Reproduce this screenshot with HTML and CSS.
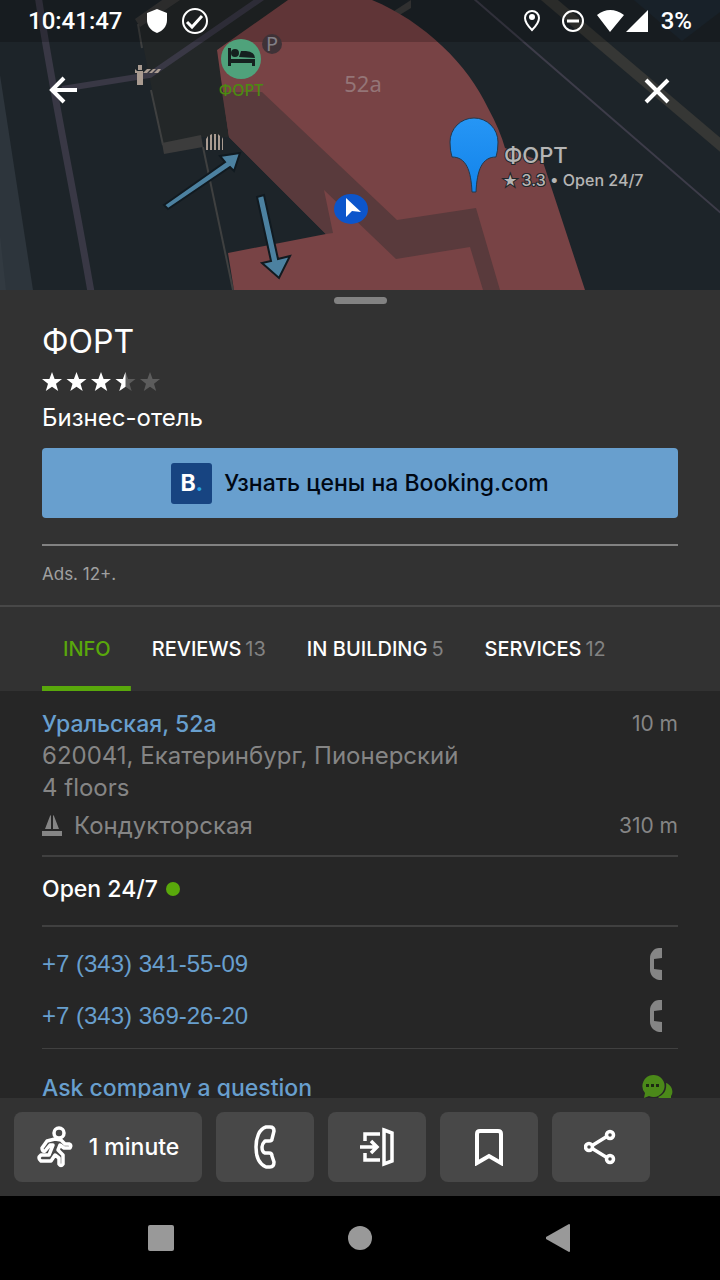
FILE: index.html
```html
<!DOCTYPE html>
<html lang="en">
<head>
    <meta charset="UTF-8">
    <meta name="viewport" content="width=device-width, initial-scale=1.0">
    <title>ФОРТ</title>
    <link rel="stylesheet" href="styles.css">
</head>
<body>
    <header class="map-area">
        <svg class="map" viewBox="0 0 720 290" preserveAspectRatio="xMidYMid slice" aria-hidden="true">
            <defs>
                <linearGradient id="pin" x1="0" y1="0" x2="0" y2="1">
                    <stop offset="0" stop-color="#2696f5"/>
                    <stop offset="1" stop-color="#1283ea"/>
                </linearGradient>
            </defs>
            <rect width="720" height="290" fill="#1d2429"/>
            <!-- ground and roads -->
            <path d="M0 75L33 290H0z" fill="#2d353c"/>
            <path d="M0 235L6 290H0z" fill="#323a41"/>
            <path d="M138 20L170 0H290L217 50L229 137L201 137L163 145z" fill="#232728"/>
            <path d="M634 0L682 41L720 12V0z" fill="#1e2a34"/>
            <path d="M38 -5C52 90 70 170 91 292" fill="none" stroke="#393845" stroke-width="7"/>
            <path d="M62 89L150 75L266 -5" fill="none" stroke="#393845" stroke-width="6"/>
            <path d="M135 19L165 -2H183L140 27z" fill="#383838"/>
            <path d="M138 24L142 48M151 90L163 145" stroke="#3f4040" stroke-width="2"/>
            <path d="M162 143L201 135L203 147L164 154z" fill="#3c3c3c"/>
            <path d="M203 147L233 290" stroke="#3f4040" stroke-width="2"/>
            <path d="M540 -8L724 148" stroke="#363735" stroke-width="11"/>
            <path d="M473 -2L722 214" stroke="#3d3c49" stroke-width="2"/>
            <path d="M391 13L411 0V8L398 16z" fill="#3c3c3c"/>
            <!-- building -->
            <path d="M288 0H372C425 22 468 65 488 108Q500 130 505 148L543 162L585 290H234L228 253L326 234L229 137L217 50z" fill="#784345"/>
            <path d="M229 137L222 92L262 92L397 220L476 208L500 290H483L470 247L396 259L324 190L333 233L326 234z" fill="#593a3c"/>
            <rect width="720" height="42" fill="#000" opacity=".2"/>
            <!-- direction arrows -->
            <g fill="#4c81a0" stroke="#111a20" stroke-width="2">
                <path d="M164 205L225 162L220 156L240 153L234 171L230 167L168 209z"/>
                <path d="M257 197L264 195L278 259L290 256L279 278L262 263L271 261z"/>
            </g>
            <!-- barrier and gate -->
            <g fill="#a99b91">
                <path d="M137 71H143V85H137zM138 65H142V70H138zM135 69L139 73H135z"/>
                <path d="M143 73L147 69H151L147 73zM149 73L153 69H156L152 73zM154 73L158 69H161L158 73z"/>
                <path d="M206 139L208 136V150H206zM210 135L212 134V150H210zM214 134H216V150H214zM218 134L220 136V150H218zM222 137L223 139V150H222z"/>
            </g>
            <!-- hotel and parking -->
            <circle cx="272" cy="44" r="10" fill="#3f3237"/>
            <text class="map-letter" x="272" y="51">P</text>
            <circle cx="241" cy="59" r="20" fill="#4fa27b"/>
            <path d="M228 48H231V59H255V66H252V63H231V66H228zM239 57L241 51H246Q255 52 255 58zM231 53A4 4 0 1 1 239 53A4 4 0 1 1 231 53z" fill="#15211f"/>
            <text class="map-hotel" x="241" y="96">ФОРТ</text>
            <text class="map-number" x="363" y="92">52a</text>
            <!-- current position -->
            <ellipse cx="351" cy="209" rx="17" ry="15" fill="#0c55cb"/>
            <path d="M346 198L361 212L352 211L346 217z" fill="#fff"/>
            <!-- selected place -->
            <path d="M450 142A24 24 0 0 1 498 142Q498 151 496 157C482 157 477 170 476 192H472C471 170 466 157 452 157Q450 151 450 142z" fill="url(#pin)" stroke="#24394c"/>
            <text class="map-name" x="504" y="163">ФОРТ</text>
            <text class="map-info" x="503" y="186"><tspan class="map-star">★</tspan> 3.3 • Open 24/7</text>
        </svg>
        <div class="status">
            <span class="clock">10:41:47</span>
            <svg width="24" height="28" viewBox="0 0 24 28"><path d="M12 2L22 6V13C22 19 18 24 12 26C6 24 2 19 2 13V6z" fill="#fff"/></svg>
            <svg width="28" height="28" viewBox="0 0 28 28" fill="none" stroke="#fff" stroke-width="2"><circle cx="14" cy="14" r="12"/><path d="M6 15L11 20L21 9" stroke-width="3"/></svg>
            <div class="status-right">
                <svg width="18" height="24" viewBox="0 0 18 24"><path d="M9 2A7 7 0 0 1 16 9C16 13 12 18 9 21C6 18 2 13 2 9A7 7 0 0 1 9 2z" fill="none" stroke="#fff" stroke-width="2"/><circle cx="9" cy="8" r="3" fill="#fff"/></svg>
                <svg class="status-dnd" width="24" height="24" viewBox="0 0 24 24" fill="none" stroke="#fff" stroke-width="2"><circle cx="12" cy="12" r="10"/><path d="M6 12H18" stroke-width="3"/></svg>
                <svg class="status-signal" width="52" height="24" viewBox="0 0 52 24" fill="#fff"><path d="M0 6Q13 -4 27 6L13 23zM29 23L51 1V23z"/></svg>
                <span>3%</span>
            </div>
        </div>
        <div class="map-controls">
            <button class="map-button" aria-label="Back"><svg width="30" height="28" viewBox="0 0 30 28" fill="none" stroke="#fff" stroke-width="4"><path d="M29 14H4M16 2L4 14L16 26"/></svg></button>
            <button class="map-button" aria-label="Close"><svg width="26" height="28" viewBox="0 0 26 28" fill="none" stroke="#fff" stroke-width="4"><path d="M2 4L24 26M24 4L2 26"/></svg></button>
        </div>
    </header>

    <section class="card">
        <div class="handle"></div>
        <h1>ФОРТ</h1>
        <svg class="stars" width="118" height="20" viewBox="0 0 118 20" role="img" aria-label="3.5 out of 5">
            <defs><path id="star" d="M10 0L12.6 7H20L14 11.7L16.2 19L10 14.7L3.8 19L6 11.7L0 7H7.4z"/></defs>
            <g fill="#fff">
                <use href="#star"/>
                <use href="#star" x="24.5"/>
                <use href="#star" x="49"/>
            </g>
            <use href="#star" x="73.5" fill="#5c5c5c"/>
            <path d="M83.5 0V14.7L77.3 19L79.5 11.7L73.5 7H80.9z" fill="#fff"/>
            <use href="#star" x="98" fill="#5c5c5c"/>
        </svg>
        <p class="kind">Бизнес-отель</p>
        <button class="booking"><span class="booking-logo">B<i>.</i></span>Узнать цены на Booking.com</button>
        <p class="ads">Ads. 12+.</p>
    </section>

    <nav class="tabs">
        <a class="tab active" href="#info">INFO</a>
        <a class="tab" href="#reviews">REVIEWS <span>13</span></a>
        <a class="tab" href="#building">IN BUILDING <span>5</span></a>
        <a class="tab" href="#services">SERVICES <span>12</span></a>
    </nav>

    <main class="details" id="info">
        <section class="address">
            <div class="line"><a href="#address">Уральская, 52а</a><span class="distance">10 m</span></div>
            <p>620041, Екатеринбург, Пионерский</p>
            <p>4 floors</p>
            <div class="line station">
                <svg width="20" height="22" viewBox="0 0 20 22" fill="#858585"><path d="M0 16H20V21H0zM8 1L9 0V14H3zM11 0L12 1L17 14H11z"/></svg>
                <span>Кондукторская</span>
                <span class="distance">310 m</span>
            </div>
        </section>
        <section class="hours">Open 24/7 <span class="dot"></span></section>
        <section class="phones">
            <div class="line phone"><a href="tel:+73433415509">+7 (343) 341-55-09</a><svg width="12" height="32" viewBox="0 0 12 32"><path d="M12 0V10L4 11V21L12 22V32H9C3 31 0 26 0 22V10C0 5 4 0 9 0z" fill="#858585"/></svg></div>
            <div class="line phone"><a href="tel:+73433692620">+7 (343) 369-26-20</a><svg width="12" height="32" viewBox="0 0 12 32"><path d="M12 0V10L4 11V21L12 22V32H9C3 31 0 26 0 22V10C0 5 4 0 9 0z" fill="#858585"/></svg></div>
        </section>
        <section class="line ask">
            <a href="#ask">Ask company a question</a>
            <svg width="32" height="28" viewBox="0 0 32 28"><path d="M25 9C31 11 33 18 30 22V27C24 28 19 25 17 23C23 21 26 16 25 9z" fill="#4b8919"/><path d="M12 1A11 11 0 1 1 8 22L3 24L4 19A11 11 0 0 1 12 1z" fill="#4b8919"/><path d="M5 10H8V13H5zM10 10H13V13H10zM15 10H18V13H15z" fill="#1d2a12"/></svg>
        </section>
    </main>

    <footer class="actions">
        <button class="action route">
            <svg width="36" height="42" viewBox="0 0 36 42" fill="none" stroke="#fff" stroke-width="3.5" stroke-linejoin="round" stroke-linecap="round"><circle cx="22" cy="7" r="5"/><path d="M18 13L10 15L5 22Q5 26 8 25L13 19H16L12 29H4Q0 32 4 35H14L18 29L22 32V38Q24 41 26 38V29L21 24L23 19L27 22H33Q35 19 32 18H28L24 14z"/></svg>
            1 minute
        </button>
        <button class="action" aria-label="Call"><svg width="22" height="44" viewBox="0 0 22 44" fill="none" stroke="#fff" stroke-width="3.5" stroke-linejoin="round"><path d="M12 2H16Q20 2 20 6L18 14Q18 16 15 16H11Q8 19 8 22Q8 27 11 28H15Q18 28 18 31L20 37Q20 42 16 42H12C5 39 2 31 2 22C2 13 5 4 12 2z"/></svg></button>
        <button class="action" aria-label="Entrance"><svg width="34" height="40" viewBox="0 0 34 40" fill="none" stroke="#fff" stroke-width="3.5"><path d="M20 7H5V14M5 26V33H20M0 20H17M11 14L17 20L11 26M24 3L32 6V34L24 37z"/></svg></button>
        <button class="action" aria-label="Save"><svg width="28" height="38" viewBox="0 0 28 38" fill="none" stroke="#fff" stroke-width="4"><path d="M2 35V6Q2 3 5 3H23Q26 3 26 6V35L14 28z"/></svg></button>
        <button class="action" aria-label="Share"><svg width="34" height="36" viewBox="0 0 34 36" fill="none" stroke="#fff" stroke-width="3.5"><path d="M9 16L22 8M9 20L22 28"/><circle cx="5" cy="18" r="3.5"/><circle cx="26" cy="6" r="3.5"/><circle cx="26" cy="30" r="3.5"/></svg></button>
    </footer>

    <nav class="system">
        <button aria-label="Recent apps"><svg width="28" height="28" viewBox="0 0 28 28"><rect x="1" y="1" width="26" height="26" rx="2"/></svg></button>
        <button aria-label="Home screen"><svg width="28" height="28" viewBox="0 0 28 28"><circle cx="14" cy="14" r="12"/></svg></button>
        <button aria-label="System back"><svg width="28" height="28" viewBox="0 0 28 28"><path d="M1 13L24 0Q25 0 25 1V27Q25 28 24 28L1 15z"/></svg></button>
    </nav>
</body>
</html>
```
FILE: styles.css
```css
* {
    box-sizing: border-box;
}

body {
    margin: 0;
    height: 100vh;
    display: flex;
    flex-direction: column;
    background-color: #262626;
    color: #fff;
    font-family: Inter, "Liberation Sans", sans-serif;
    font-size: 24px;
    line-height: 32px;
}

h1, p {
    margin: 0;
    font-weight: 400;
}

a {
    color: #689fce;
    text-decoration: none;
}

button {
    padding: 0;
    border: none;
    background: none;
    color: inherit;
    font: inherit;
    cursor: pointer;
}

svg {
    display: block;
    flex-shrink: 0;
}

/* Map */
.map-area {
    position: relative;
    flex: 0 0 290px;
}

.map {
    position: absolute;
    width: 100%;
    height: 100%;
}

.map-letter,
.map-number,
.map-hotel {
    font-family: "Noto Sans", sans-serif;
    text-anchor: middle;
}

.map-letter {
    font-size: 20px;
    fill: #827f86;
}

.map-number {
    font-size: 22px;
    fill: #947577;
}

.map-hotel {
    font-size: 16px;
    font-weight: 500;
    fill: #4c8b10;
}

.map-name,
.map-info {
    fill: #b5b5b5;
    stroke: #20262a;
    stroke-width: 2px;
    paint-order: stroke;
}

.map-name {
    font-size: 22px;
    font-weight: 500;
}

.map-info {
    font-size: 16px;
    font-weight: 500;
}

.map-star {
    font-family: "DejaVu Sans", sans-serif;
}

.status {
    position: relative;
    display: flex;
    align-items: center;
    gap: 12px;
    height: 42px;
    padding: 0 28px;
    font-family: Roboto, sans-serif;
    font-weight: 500;
}

.clock {
    margin-right: 10px;
}

.status-right {
    display: flex;
    align-items: center;
    margin-left: auto;
}

.status-dnd {
    margin-left: 20px;
}

.status-signal {
    margin: 0 12px;
}

.map-controls {
    position: relative;
    display: flex;
    justify-content: space-between;
    padding: 34px 50px 0 48px;
}

/* Place card */
.card {
    display: flex;
    flex-direction: column;
    padding: 7px 42px 0;
    background-color: #323232;
}

.handle {
    align-self: center;
    width: 53px;
    height: 7px;
    border-radius: 4px;
    background-color: #828282;
}

h1 {
    margin-top: 18px;
    font-size: 32px;
    line-height: 40px;
}

.stars {
    margin: 10px 0;
}

.booking {
    display: flex;
    align-items: center;
    justify-content: center;
    gap: 12px;
    height: 70px;
    margin: 14px 0 26px;
    border-radius: 4px;
    background-color: #689fce;
    color: #000814;
    font-size: 23px;
    font-weight: 500;
}

.booking-logo {
    width: 41px;
    border-radius: 3px;
    background-color: #174481;
    color: #fff;
    font-weight: 700;
    line-height: 41px;
}

.booking-logo i {
    color: #27a5e8;
    font-style: normal;
}

.ads {
    padding: 16px 0 19px;
    border-top: 2px solid #828282;
    color: #a0a0a0;
    font-size: 17px;
    line-height: 24px;
}

.tabs {
    display: flex;
    padding: 0 42px;
    border-top: 2px solid #484848;
    background-color: #323232;
    font-size: 20px;
    font-weight: 500;
}

.tab {
    display: flex;
    gap: 4px;
    padding: 26px 20px 21px 21px;
    border-bottom: 5px solid transparent;
    color: #fff;
    white-space: nowrap;
}

.tab span {
    color: #828282;
    font-weight: 400;
}

.tab.active {
    border-radius: 4px 4px 0 0;
    background: linear-gradient(#59a80b, #59a80b) bottom / 100% 5px no-repeat border-box;
    color: #59a80b;
}

/* Details list */
.details {
    flex: 1;
    min-height: 0;
    overflow: hidden;
    padding: 0 42px;
}

.details a {
    font-size: 23px;
    font-weight: 500;
}

.line {
    display: flex;
    align-items: center;
    justify-content: space-between;
}

.address {
    padding: 17px 0 13px;
    border-bottom: 2px solid #404040;
    color: #858585;
}

.distance {
    margin-left: auto;
    font-size: 21px;
}

.station {
    gap: 12px;
    margin-top: 6px;
}

.hours {
    display: flex;
    align-items: center;
    gap: 8px;
    padding: 16px 0 20px;
    border-bottom: 2px solid #404040;
    font-size: 23px;
    font-weight: 500;
}

.dot {
    width: 14px;
    height: 14px;
    border-radius: 50%;
    background-color: #59a80b;
}

.phones {
    padding: 11px 0 6px;
    border-bottom: 1px solid #404040;
}

.phone {
    height: 52px;
    padding-right: 16px;
}

.details .phone a {
    font-family: "Liberation Sans", sans-serif;
    font-size: 24px;
}

.ask {
    padding: 23px 5px 0 0;
}

/* Bottom bars */
.actions {
    display: flex;
    gap: 14px;
    padding: 14px;
    background-color: #323232;
}

.action {
    display: flex;
    align-items: center;
    justify-content: center;
    width: 98px;
    height: 70px;
    border-radius: 8px;
    background-color: #484848;
    font-size: 23px;
    font-weight: 500;
}

.route {
    gap: 16px;
    width: 188px;
}

.system {
    display: flex;
    justify-content: center;
    gap: 171px;
    padding: 28px 0;
    background-color: #000;
    fill: #999;
}
```
